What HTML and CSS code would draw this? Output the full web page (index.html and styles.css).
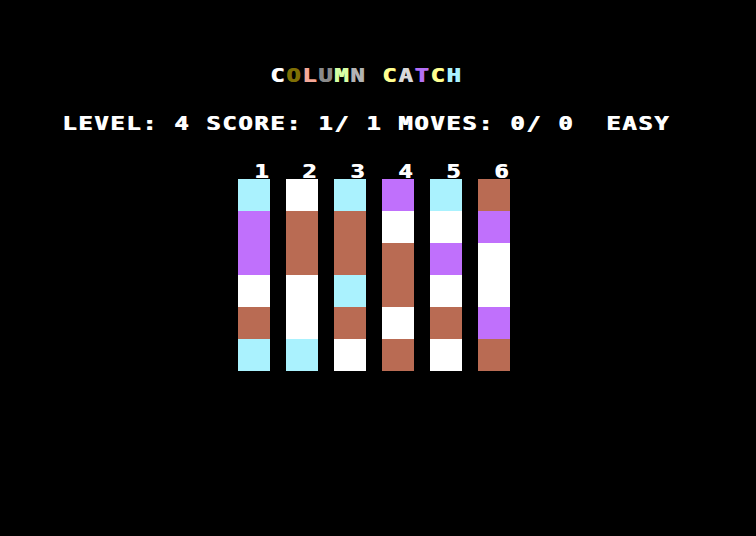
FILE: index.html
```html
<!DOCTYPE html>
<html lang="en">
<head>
  <meta charset="UTF-8">
  <meta name="viewport" content="width=device-width, initial-scale=1.0">
  <title>Column Catch</title>
  <link rel="stylesheet" href="styles.css">
</head>
<body>
  <div class="screen">
    <h1 class="line title"><span class="txt"><span class="c-white">C</span><span class="c-olive">O</span><span class="c-pink">L</span><span class="c-gray">U</span><span class="c-lgreen">M</span><span class="c-lgray">N</span> <span class="c-yellow">C</span><span class="c-silver">A</span><span class="c-purple">T</span><span class="c-yellow">C</span><span class="c-cyan">H</span></span></h1>

    <p class="line status"><span class="txt">LEVEL: 4 SCORE: 1/ 1 MOVES: 0/ 0  EASY</span></p>

    <div class="board">
      <div class="col">
        <div class="line num"><span class="txt">1</span></div>
        <div class="cell cyan"></div>
        <div class="cell purple"></div>
        <div class="cell purple"></div>
        <div class="cell white"></div>
        <div class="cell brown"></div>
        <div class="cell cyan"></div>
      </div>
      <div class="col">
        <div class="line num"><span class="txt">2</span></div>
        <div class="cell white"></div>
        <div class="cell brown"></div>
        <div class="cell brown"></div>
        <div class="cell white"></div>
        <div class="cell white"></div>
        <div class="cell cyan"></div>
      </div>
      <div class="col">
        <div class="line num"><span class="txt">3</span></div>
        <div class="cell cyan"></div>
        <div class="cell brown"></div>
        <div class="cell brown"></div>
        <div class="cell cyan"></div>
        <div class="cell brown"></div>
        <div class="cell white"></div>
      </div>
      <div class="col">
        <div class="line num"><span class="txt">4</span></div>
        <div class="cell purple"></div>
        <div class="cell white"></div>
        <div class="cell brown"></div>
        <div class="cell brown"></div>
        <div class="cell white"></div>
        <div class="cell brown"></div>
      </div>
      <div class="col">
        <div class="line num"><span class="txt">5</span></div>
        <div class="cell cyan"></div>
        <div class="cell white"></div>
        <div class="cell purple"></div>
        <div class="cell white"></div>
        <div class="cell brown"></div>
        <div class="cell white"></div>
      </div>
      <div class="col">
        <div class="line num"><span class="txt">6</span></div>
        <div class="cell brown"></div>
        <div class="cell purple"></div>
        <div class="cell white"></div>
        <div class="cell white"></div>
        <div class="cell purple"></div>
        <div class="cell brown"></div>
      </div>
    </div>
  </div>
</body>
</html>
```

FILE: styles.css
```css
body {
  margin: 0;
  padding: 0;
  background-color: #000;
  color: #fff;
  font-family: "DejaVu Sans Mono", "Liberation Mono", monospace;
  font-weight: bold;
}
/* 40x25 text screen, 16px character cells */
.screen {
  width: 640px;
  height: 400px;
  padding: 67px 0 0 62px;
}
.line {
  margin: 0;
  height: 16px;
  font-size: 19px;
  line-height: 16px;
  font-weight: bold;
  white-space: pre;
}
/* widen the glyphs to the square 8x8 look, pitch stays 16px */
.txt {
  display: inline-block;
  transform: scaleX(1.25);
  transform-origin: 0 0;
  letter-spacing: 1.36px;
  text-shadow: 0.8px 0 0 currentColor;
}
.title {
  margin-left: 208px;
}
.status {
  margin-top: 32px;
}
.board {
  display: flex;
  gap: 16px;
  margin: 32px 0 0 176px;
}
.col {
  width: 32px;
}
.num {
  padding-left: 16px;
}
.cell {
  height: 32px;
}
.cell.cyan { background-color: #aaf2fe; }
.cell.purple { background-color: #c070fc; }
.cell.white { background-color: #fff; }
.cell.brown { background-color: #b96b53; }

.c-white { color: #fff; }
.c-olive { color: #7f6f05; }
.c-pink { color: #f5a898; }
.c-gray { color: #8a8a8a; }
.c-lgreen { color: #d6ffa6; }
.c-lgray { color: #b3b3b3; }
.c-yellow { color: #ffff90; }
.c-silver { color: #d9d9d9; }
.c-purple { color: #b470f6; }
.c-cyan { color: #aaf2fe; }
```
